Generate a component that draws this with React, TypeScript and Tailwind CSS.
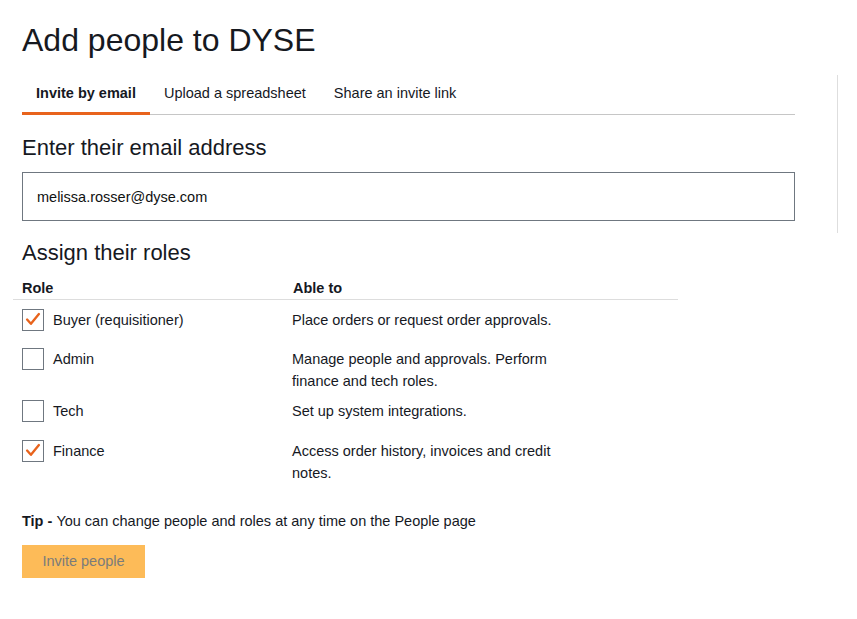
import { useState } from 'react';

type Role = {
  name: string,
  description: string,
  checked: boolean,
  top: string,
}

const roles: Role[] = [
  { name: 'Buyer (requisitioner)', description: 'Place orders or request order approvals.', checked: true, top: 'mt-[9px]' },
  { name: 'Admin', description: 'Manage people and approvals. Perform finance and tech roles.', checked: false, top: 'mt-[17px]' },
  { name: 'Tech', description: 'Set up system integrations.', checked: false, top: 'mt-[8px]' },
  { name: 'Finance', description: 'Access order history, invoices and credit notes.', checked: true, top: 'mt-[18px]' },
];

const tabs = ['Invite by email', 'Upload a spreadsheet', 'Share an invite link'];

function Checkbox({ checked, onClick }: { checked: boolean, onClick: () => void }) {
  return (
    <button
      type="button"
      onClick={onClick}
      className="w-[22px] h-[22px] shrink-0 border border-[#6f7780] bg-white flex items-center justify-center"
    >
      {checked && (
        <svg width="22" height="22" viewBox="0 0 22 22" fill="none">
          <path d="M4.5 10.5 L8.7 15.2 L17.5 4.5" stroke="#e8631c" strokeWidth="2.6" strokeLinecap="round" strokeLinejoin="round" />
        </svg>
      )}
    </button>
  );
}

export default function App() {
  const [checked, setChecked] = useState(roles.map(r => r.checked));
  const [email, setEmail] = useState('melissa.rosser@dyse.com');

  const toggle = (i: number) => setChecked(c => c.map((v, j) => (j === i ? !v : v)));

  return (
    <div className="flex bg-white text-[#16191f] font-['Liberation_Sans',Arial,sans-serif] min-h-[619px]">
      <div className="ml-[22px] w-[773px] flex flex-col">
        <h1 className="mt-5 text-[32px] leading-[40px] font-normal">Add people to DYSE</h1>

        {/* tabs */}
        <div className="mt-[23px] flex border-b border-[#c6c6c6]">
          {tabs.map((t, i) => (
            <div
              key={t}
              className={`px-[14px] pb-[9px] text-[14.5px] leading-5 -mb-px border-b-[3px] ${i === 0 ? 'font-bold border-[#e8631c]' : 'border-transparent'}`}
            >
              {t}
            </div>
          ))}
        </div>

        <h2 className="mt-[19px] text-[22px] leading-7 font-normal">Enter their email address</h2>
        <input
          value={email}
          onChange={e => setEmail(e.target.value)}
          className="mt-[10px] h-[49px] w-full border border-[#6f7780] px-[14px] text-[14.5px] text-[#0f1111] outline-none"
        />

        <h2 className="mt-[18px] text-[22px] leading-7 font-normal">Assign their roles</h2>

        {/* roles table */}
        <div className="-ml-[9px] w-[665px]">
          <div className="mt-[11px] flex border-b border-[#dddddd] text-[14.5px] leading-5 font-bold">
            <div className="w-[271px] pl-[9px] pb-px">Role</div>
            <div className="pl-[9px] pb-px">Able to</div>
          </div>
          {roles.map((r, i) => (
            <div key={r.name} className={`flex text-[14.5px] leading-[22px] ${r.top}`}>
              <div className="w-[271px] pl-[9px] flex gap-[9px]">
                <Checkbox checked={checked[i]} onClick={() => toggle(i)} />
                <span>{r.name}</span>
              </div>
              <div className="pl-[8px] max-w-[292px]">{r.description}</div>
            </div>
          ))}
        </div>

        <p className="mt-[27px] text-[14.5px] leading-5">
          <span className="font-bold">Tip - </span>You can change people and roles at any time on the People page
        </p>

        <div className="mt-[14px]">
          <button
            type="button"
            disabled
            className="w-[123px] h-[33px] bg-[#fdbb58] text-[14.5px] text-[#7b7b7b]"
          >
            Invite people
          </button>
        </div>
      </div>

      <div className="ml-[42px] mt-[75px] w-px h-[158px] bg-[#dedede]" />
    </div>
  );
}
